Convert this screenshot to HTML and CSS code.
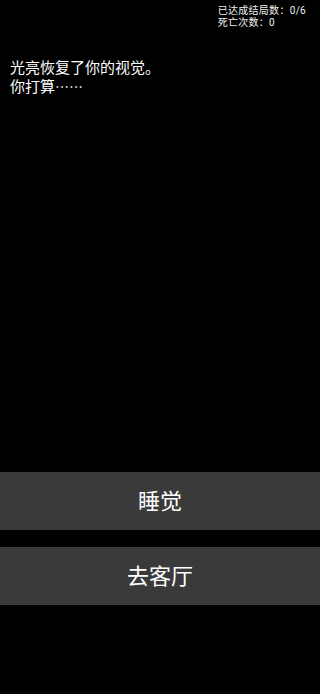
FILE: index.html
```html
<!DOCTYPE html>
<html lang="zh-CN">
<head>
<meta charset="utf-8">
<meta name="viewport" content="width=device-width, initial-scale=1">
<link rel="stylesheet" href="styles.css">
</head>
<body>
<div class="page">
  <div class="stats">
    <div class="stats-box">
      <div class="stat-line">已达成结局数：0/6</div>
      <div class="stat-line">死亡次数：0</div>
    </div>
  </div>
  <div class="story">
    <p class="story-line">光亮恢复了你的视觉。</p>
    <p class="story-line">你打算<span class="cjk">……</span></p>
  </div>
  <div class="spacer"></div>
  <div class="choices">
    <button class="choice">睡觉</button>
    <button class="choice">去客厅</button>
  </div>
</div>
</body>
</html>
```
FILE: styles.css
```css
* { box-sizing: border-box; }
html, body {
  margin: 0;
  padding: 0;
  background: #000;
}
body {
  font-family: Roboto, "Noto Sans CJK SC", sans-serif;
  color: #fff;
}
.page {
  width: 320px;
  height: 694px;
  display: flex;
  flex-direction: column;
}
.stats {
  display: flex;
  justify-content: flex-end;
  padding: 5px 14px 0 0;
}
.stats-box {
  font-size: 10px;
  line-height: 12px;
  letter-spacing: 0.3px;
  color: #f2f2f2;
}
.stat-line {
  height: 12px;
}
.story {
  margin-top: 30px;
  padding-left: 10px;
  font-size: 15px;
  line-height: 18px;
}
.story-line {
  margin: 0;
}
.cjk {
  font-family: "Noto Sans CJK SC", sans-serif;
  font-size: 14px;
}
.spacer {
  flex: 1;
}
.choices {
  display: flex;
  flex-direction: column;
  gap: 17px;
  margin-bottom: 89px;
}
.choice {
  height: 58px;
  border: 0;
  margin: 0;
  background: #3a3a3a;
  color: #fff;
  font-family: Roboto, "Noto Sans CJK SC", sans-serif;
  font-size: 22px;
  padding: 0 0 4px 0;
  width: 100%;
}
```
